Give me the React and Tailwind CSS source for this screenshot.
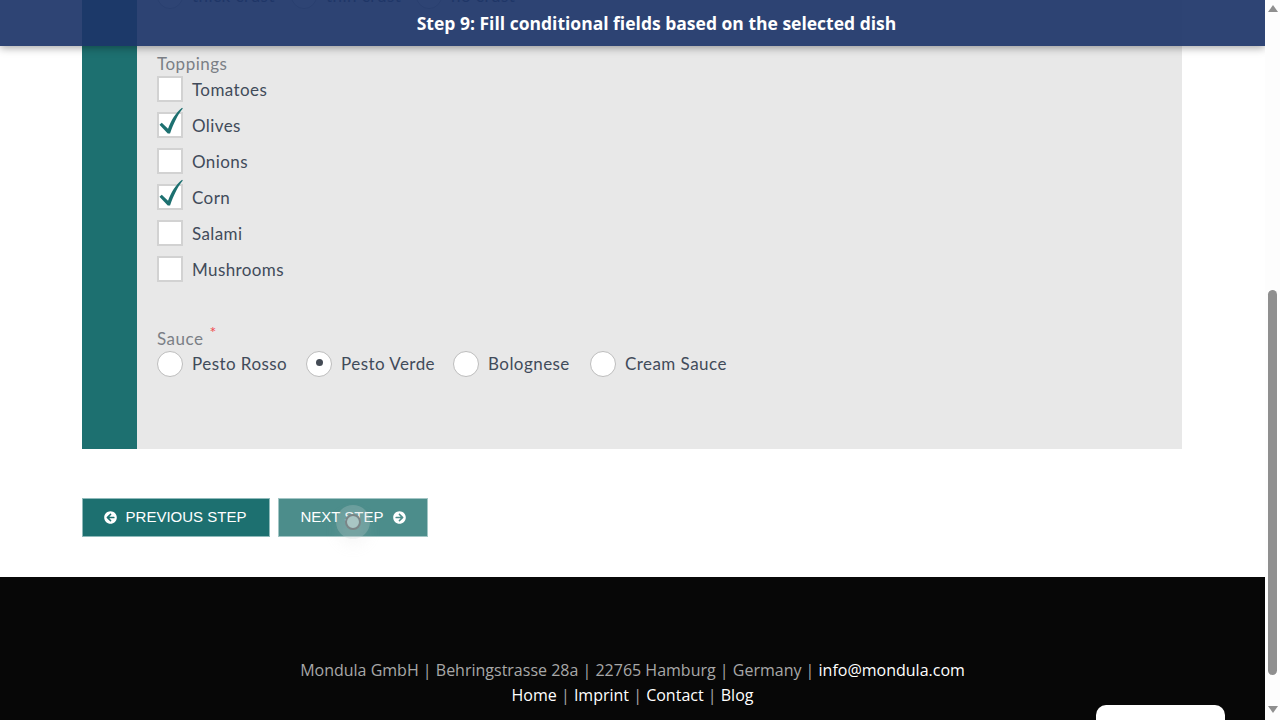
import React from "react";
import { FaArrowCircleLeft, FaArrowCircleRight } from "react-icons/fa";

function Check() {
  return (
    <svg className="absolute left-0 top-[-7px] w-[24px] h-[27px]" viewBox="0 0 26 28" fill="none">
      <path d="M0.5 18.5 L3 16.5 L9.8 23 C13 14 18 6 25 0.3 L25.8 1 C20 8 15.5 18 12 28 L9.5 28 Z" fill="#1d7070" />
    </svg>
  );
}

function CheckRow({ label, checked }) {
  return (
    <div className="flex items-center h-[36px]">
      <span className="relative w-[26px] h-[26px] mt-[-2px] bg-white border-2 border-[#d2d2d2] shrink-0">
        {checked && <Check />}
      </span>
      <span className="ml-[9px] text-[17px] tracking-[0.4px] text-[#414b5a] font-['Lato',sans-serif]">{label}</span>
    </div>
  );
}

function Radio({ label, checked, w }) {
  return (
    <div className="flex items-center h-[26px]" style={{ width: w }}>
      <span className="relative flex items-center justify-center w-[26px] h-[26px] rounded-full bg-white border border-[#bdbdbd] shrink-0">
        {checked && <span className="w-[7px] h-[7px] mt-[-3px] rounded-full bg-[#444b55]" />}
      </span>
      <span className="ml-[9px] text-[17px] tracking-[0.45px] text-[#414b5a] font-['Lato',sans-serif] whitespace-nowrap">{label}</span>
    </div>
  );
}

export default function App() {
  return (
    <div className="relative flex w-[1280px] h-[720px] overflow-hidden bg-white">
      <div className="relative w-[1265px] h-[720px] overflow-hidden">
        <div className="flex flex-col">
          <div className="flex mx-[82px] w-[1100px] h-[475px] mt-[-26px]">
            <div className="w-[55px] bg-[#1d7070]" />
            <div className="flex-1 bg-[#e8e8e8] pl-[20px]">
              <div className="flex h-[26px] mt-[9px]">
                <Radio label="thick crust" w={134} />
                <Radio label="thin crust" w={125} />
                <Radio label="no crust" w={120} />
              </div>
              <div className="mt-[43px] h-[20px] text-[17px] tracking-[0.5px] leading-[24px] text-[#7b7f86] font-['Lato',sans-serif]">Toppings</div>
              <div className="flex flex-col">
                <CheckRow label="Tomatoes" />
                <CheckRow label="Olives" checked />
                <CheckRow label="Onions" />
                <CheckRow label="Corn" checked />
                <CheckRow label="Salami" />
                <CheckRow label="Mushrooms" />
              </div>
              <div className="mt-[39px] h-[24px] flex text-[17px] tracking-[0.5px] leading-[24px] text-[#7b7f86] font-['Lato',sans-serif]">
                Sauce<span className="ml-[6px] mt-[-7px] text-[#f0484f] text-[16px]">*</span>
              </div>
              <div className="flex">
                <Radio label="Pesto Rosso" w={149} />
                <Radio label="Pesto Verde" checked w={147} />
                <Radio label="Bolognese" w={137} />
                <Radio label="Cream Sauce" w={150} />
              </div>
            </div>
          </div>
          <div className="flex gap-[8px] mx-[82px] mt-[49px] font-['Liberation_Sans',sans-serif] text-[15px] text-white">
            <div className="flex items-center justify-center gap-[9px] w-[188px] h-[39px] pr-[2px] bg-[#1d7070] border border-[#8fbaba]">
              <FaArrowCircleLeft className="w-[13px] h-[13px]" />
              <span>PREVIOUS STEP</span>
            </div>
            <div className="flex items-center justify-center gap-[9px] w-[150px] h-[39px] bg-[#4c8d8b] border border-[#a3c6c5]">
              <span>NEXT STEP</span>
              <FaArrowCircleRight className="w-[13px] h-[13px]" />
            </div>
          </div>
          <div className="mt-[40px] h-[200px] bg-[#070707] flex flex-col items-center pt-[81px] text-[16px] leading-[25px] font-['Open_Sans',sans-serif] text-[#a8a8a8]">
            <div>
              Mondula GmbH | Behringstrasse 28a | 22765 Hamburg | Germany | <span className="text-white font-medium">info@mondula.com</span>
            </div>
            <div>
              <span className="text-white font-medium">Home</span> | <span className="text-white font-medium">Imprint</span> | <span className="text-white font-medium">Contact</span> | <span className="text-white font-medium">Blog</span>
            </div>
          </div>
        </div>

        <div className="absolute left-0 top-0 w-full h-[46px] flex items-center justify-center pl-[48px] bg-[#1c3468]/92 shadow-[0_2px_8px_rgba(0,0,0,0.35)] text-white text-[17.5px] font-bold font-['Open_Sans',sans-serif]">
          Step 9: Fill conditional fields based on the selected dish
        </div>

        <div className="absolute left-[1096px] top-[705px] w-[129px] h-[40px] bg-white rounded-[10px]" />

        <div className="absolute left-[345px] top-[514px] w-[16px] h-[16px] rounded-full bg-[#a9c6c4] border-2 border-[#7b8587] shadow-[0_0_0_9px_rgba(200,210,210,0.25),0_8px_14px_8px_rgba(200,200,200,0.12)]" />
      </div>

      <div className="relative w-[15px] h-[720px] bg-[#fdfdfd] flex flex-col items-center">
        <svg className="mt-[5px] w-[10px] h-[7px]" viewBox="0 0 10 7"><path d="M5 0 L10 7 L0 7 Z" fill="#8f8f8f" /></svg>
        <div className="mt-[278px] w-[9px] h-[385px] bg-[#8f8f8f] rounded-full" />
        <svg className="mt-[31px] w-[10px] h-[7px]" viewBox="0 0 10 7"><path d="M0 0 L10 0 L5 7 Z" fill="#8f8f8f" /></svg>
      </div>
    </div>
  );
}
